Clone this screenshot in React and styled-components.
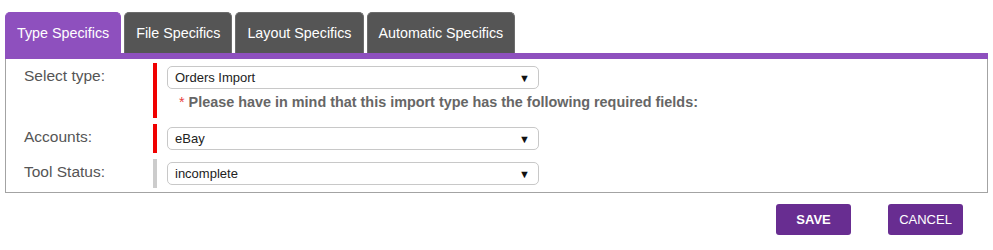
import React from 'react';
import styled, { createGlobalStyle } from 'styled-components';

const TABS = ['Type Specifics', 'File Specifics', 'Layout Specifics', 'Automatic Specifics'];

const FIELDS = [
  { label: 'Select type:', value: 'Orders Import', required: true, note: true },
  { label: 'Accounts:', value: 'eBay', required: true },
  { label: 'Tool Status:', value: 'incomplete', required: false },
];

const GlobalStyle = createGlobalStyle`
  body {
    margin: 0;
    background: #fff;
    font-family: "Liberation Sans", Arial, sans-serif;
  }
`;

const App = () => {
  return (
    <Page>
      <GlobalStyle />
      <TabBar>
        {TABS.map((tab, i) => (
          <Tab key={tab} $active={i === 0}>
            {tab}
          </Tab>
        ))}
      </TabBar>
      <Panel>
        {FIELDS.map((field) => (
          <Row key={field.label}>
            <Label>{field.label}</Label>
            <Field $required={field.required}>
              <SelectBox>
                <span>{field.value}</span>
                <Arrow>▼</Arrow>
              </SelectBox>
              {field.note && (
                <Note>
                  <Star>*</Star> Please have in mind that this import type has the following required fields:
                </Note>
              )}
            </Field>
          </Row>
        ))}
      </Panel>
      <Actions>
        <Button $bold>SAVE</Button>
        <Button>CANCEL</Button>
      </Actions>
    </Page>
  );
};

const Page = styled.div`
  padding: 12px 5px 0 5px;
`;

const TabBar = styled.div`
  display: flex;
  gap: 3px;
  border-bottom: 6px solid #8e50be;
`;

const Tab = styled.div`
  height: 41px;
  padding: 0 11px;
  display: flex;
  align-items: center;
  box-sizing: border-box;
  border-radius: 5px 5px 0 0;
  background: ${(p) => (p.$active ? '#8e50be' : '#555555')};
  border: 1px solid ${(p) => (p.$active ? '#8e50be' : '#6c6c6c')};
  border-bottom: none;
  color: #fff;
  font-size: 14.3px;
`;

const Panel = styled.div`
  border: 1px solid #a3a3a3;
  border-top: none;
  padding: 4px 0 4px 0;
  display: flex;
  flex-direction: column;
  gap: 6px;
`;

const Row = styled.div`
  display: grid;
  grid-template-columns: 147px 1fr;
  align-items: start;
`;

const Label = styled.div`
  padding: 1px 0 0 18px;
  line-height: 23px;
  font-size: 15.5px;
  color: #555;
`;

const Field = styled.div`
  border-left: 4px solid ${(p) => (p.$required ? '#f00000' : '#cccccc')};
  padding: 3px 0 3px 10px;
`;

const SelectBox = styled.div`
  width: 372px;
  height: 23px;
  box-sizing: border-box;
  border: 1px solid #c8c8c8;
  border-radius: 5px;
  padding: 0 8px 0 7px;
  display: flex;
  align-items: center;
  justify-content: space-between;
  font-size: 13px;
  color: #222;
`;

const Arrow = styled.span`
  font-size: 11px;
  color: #111;
`;

const Note = styled.div`
  margin: 3px 0 3px 12px;
  line-height: 20px;
  font-size: 14.4px;
  font-weight: bold;
  color: #666;
`;

const Star = styled.span`
  color: #e84040;
  font-weight: normal;
`;

const Actions = styled.div`
  display: flex;
  justify-content: flex-end;
  gap: 37px;
  padding: 11px 25px 0 0;
`;

const Button = styled.button`
  width: 75px;
  height: 31px;
  border: none;
  border-radius: 3px;
  background: #682d91;
  color: #fff;
  font-family: "Liberation Sans", Arial, sans-serif;
  font-size: 13px;
  font-weight: ${(p) => (p.$bold ? 'bold' : 'normal')};
  padding: 0;
`;

export default App;
